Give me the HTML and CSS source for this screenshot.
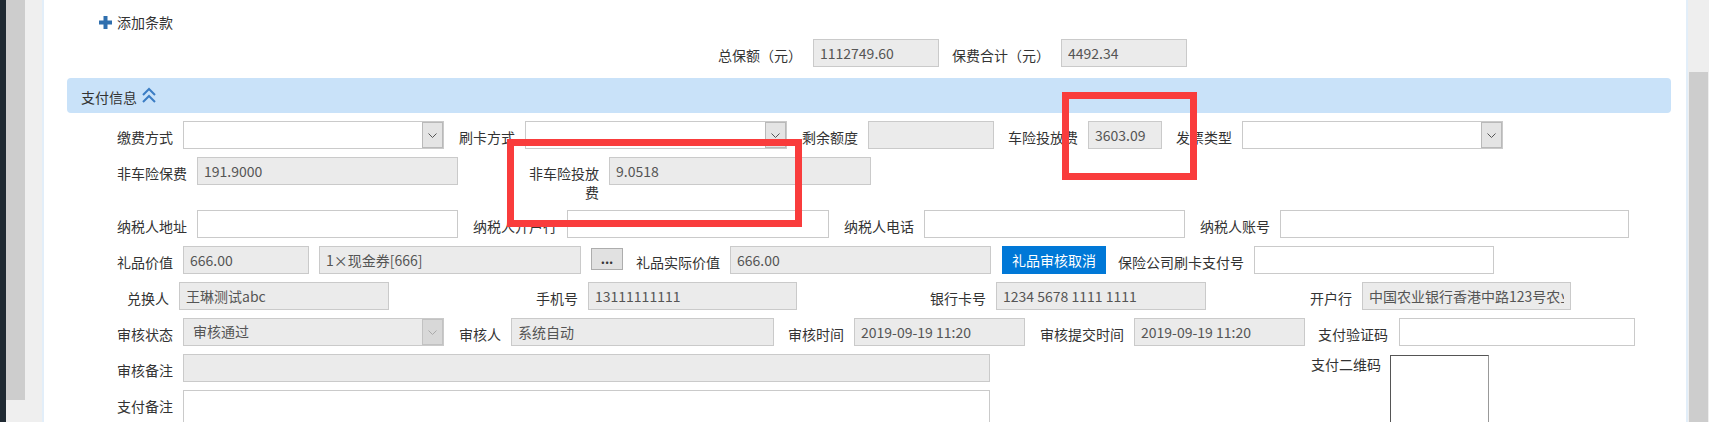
FILE: index.html
```html
<!DOCTYPE html>
<html>
<head>
  <meta charset="utf-8">
  <title>支付信息</title>
  <link rel="stylesheet" href="styles.css">
</head>
<body>
  <div class="edge"></div>
  <div class="outer-scroll"><div class="outer-thumb"></div></div>
  <div class="gutter"></div>

  <div class="panel">
    <div class="add-row">
      <svg class="plus" width="13" height="13" viewBox="0 0 13 13"><rect x="4.5" y="0" width="4" height="13"/><rect x="0" y="4.5" width="13" height="4"/></svg>
      <span>添加条款</span>
    </div>

    <div class="totals">
      <label class="lbl mr11">总保额（元）</label>
      <input class="fld ro w126" value="1112749.60" readonly>
      <label class="lbl mr11 g13">保费合计（元）</label>
      <input class="fld ro w126" value="4492.34" readonly>
    </div>

    <div class="sec-head">
      <span>支付信息</span>
      <svg class="up2" width="14" height="17" viewBox="0 0 14 17"><polyline points="1,8 7,2 13,8"/><polyline points="1,15 7,9 13,15"/></svg>
    </div>

    <div class="form">
      <!-- 第一行 -->
      <div class="row">
        <label class="lbl">缴费方式</label>
        <div class="sel w261"><span class="sel-btn"><svg width="9" height="5" viewBox="0 0 9 5"><polyline points="0.5,0.5 4.5,4.5 8.5,0.5"/></svg></span></div>
        <label class="lbl g15">刷卡方式</label>
        <div class="sel w262"><span class="sel-btn"><svg width="9" height="5" viewBox="0 0 9 5"><polyline points="0.5,0.5 4.5,4.5 8.5,0.5"/></svg></span></div>
        <label class="lbl g15">剩余额度</label>
        <input class="fld ro w126" value="" readonly>
        <label class="lbl g14">车险投放费</label>
        <input class="fld ro w74" value="3603.09" readonly>
        <label class="lbl g14">发票类型</label>
        <div class="sel w261"><span class="sel-btn"><svg width="9" height="5" viewBox="0 0 9 5"><polyline points="0.5,0.5 4.5,4.5 8.5,0.5"/></svg></span></div>
      </div>

      <div class="row">
        <label class="lbl">非车险保费</label>
        <input class="fld ro w261" value="191.9000" readonly>
        <label class="lbl wrap g71">非车险投放费</label>
        <input class="fld ro w262" value="9.0518" readonly>
      </div>

      <div class="row">
        <label class="lbl">纳税人地址</label>
        <input class="fld w261" value="">
        <label class="lbl g15">纳税人开户行</label>
        <input class="fld w262" value="">
        <label class="lbl g15">纳税人电话</label>
        <input class="fld w261" value="">
        <label class="lbl g15">纳税人账号</label>
        <input class="fld w349" value="">
      </div>

      <div class="row">
        <label class="lbl">礼品价值</label>
        <input class="fld ro w126" value="666.00" readonly>
        <input class="fld ro w262 g10" value="1×现金券[666]" readonly>
        <button class="dots g10">...</button>
        <label class="lbl g13">礼品实际价值</label>
        <input class="fld ro w261" value="666.00" readonly>
        <button class="btn-blue g11">礼品审核取消</button>
        <label class="lbl g12">保险公司刷卡支付号</label>
        <input class="fld w240" value="">
      </div>

      <div class="row">
        <label class="lbl g10">兑换人</label>
        <input class="fld ro w210" value="王琳测试abc" readonly>
        <label class="lbl g147">手机号</label>
        <input class="fld ro w209" value="13111111111" readonly>
        <label class="lbl g133">银行卡号</label>
        <input class="fld ro w210" value="1234 5678 1111 1111" readonly>
        <label class="lbl g104">开户行</label>
        <input class="fld ro w209" value="中国农业银行香港中路123号农业银行" readonly>
      </div>

      <div class="row">
        <label class="lbl">审核状态</label>
        <div class="sel off w261"><span class="sel-val">审核通过</span><span class="sel-btn"><svg width="9" height="5" viewBox="0 0 9 5"><polyline points="0.5,0.5 4.5,4.5 8.5,0.5"/></svg></span></div>
        <label class="lbl g15">审核人</label>
        <input class="fld ro w263" value="系统自动" readonly>
        <label class="lbl g14">审核时间</label>
        <input class="fld ro w171" value="2019-09-19 11:20" readonly>
        <label class="lbl g15">审核提交时间</label>
        <input class="fld ro w171" value="2019-09-19 11:20" readonly>
        <label class="lbl mr11 g13">支付验证码</label>
        <input class="fld w236" value="">
      </div>

      <div class="bottom">
        <div class="left-col">
          <div class="row">
            <label class="lbl">审核备注</label>
            <input class="fld ro w807" value="" readonly>
          </div>
          <div class="row">
            <label class="lbl">支付备注</label>
            <textarea class="fld area w807"></textarea>
          </div>
        </div>
        <div class="qr-block">
          <label class="qr-lbl">支付二维码</label>
          <div class="qr-box"></div>
        </div>
      </div>
    </div>

    <!-- 截图上的红框标注 -->
    <div class="mark mark-a"></div>
    <div class="mark mark-b"></div>
  </div>

  <div class="inner-scroll"><div class="inner-thumb"></div></div>
</body>
</html>
```

FILE: styles.css
```css
html, body {
  margin: 0;
  height: 422px;
  overflow: hidden;
}

body {
  display: flex;
  font-family: "Noto Sans CJK SC", "Microsoft YaHei", sans-serif;
  font-size: 14px;
  color: #333;
}

/* 外框和滚动条 */
.edge {
  width: 6px;
  background-color: #202a33;
}

.outer-scroll {
  width: 19px;
  background-color: #efefef;
}

.outer-thumb {
  height: 400px;
  background-color: #cdcdcd;
}

.gutter {
  width: 17px;
  background-color: #efefef;
}

.inner-scroll {
  width: 21px;
  background-color: #eeeeee;
  padding-top: 72px;
  box-sizing: border-box;
}

.inner-thumb {
  margin-left: 1px;
  width: 19px;
  height: 100%;
  background-color: #cdcdcd;
}

.panel {
  flex: 1;
  position: relative;
  background-color: #fff;
  border-left: 2px solid #e2eef9;
  border-right: 2px solid #e2eef9;
}

/* 添加条款 */
.add-row {
  display: flex;
  align-items: center;
  height: 20px;
  padding: 12px 0 0 55px;
  line-height: 20px;
}

.plus {
  fill: #2f6fae;
  margin-right: 5px;
}

.totals {
  display: flex;
  align-items: flex-start;
  margin-top: 7px;
  padding-left: 674px;
}

/* 支付信息 标题栏 */
.sec-head {
  display: flex;
  align-items: center;
  height: 35px;
  margin: 11px 15px 0 23px;
  padding-left: 14px;
  background-color: #c9e2f9;
  border-radius: 4px;
  line-height: 20px;
}

.sec-head span {
  padding-top: 2px;
}

.up2 {
  margin-left: 5px;
  fill: none;
  stroke: #3b7dc4;
  stroke-width: 2;
}

.form {
  margin-top: 8px;
  padding-left: 73px;
}

.row {
  display: flex;
  align-items: flex-start;
  margin-bottom: 8px;
}

.lbl {
  flex-shrink: 0;
  padding-top: 7px;
  line-height: 19px;
  white-space: nowrap;
  margin-right: 10px;
}

.lbl.wrap {
  white-space: normal;
  width: 70px;
  text-align: right;
}

/* 输入框 */
.fld {
  flex-shrink: 0;
  box-sizing: border-box;
  height: 28px;
  margin: 0;
  padding: 0 6px;
  border: 1px solid #cacaca;
  background-color: #fff;
  font-family: "Noto Sans CJK SC", "Microsoft YaHei", sans-serif;
  font-size: 14px;
  color: #555;
  outline: none;
}

.fld.ro {
  background-color: #ebebeb;
}

.area {
  height: 60px;
  resize: none;
}

.w74 { width: 74px; }
.w126 { width: 126px; }
.w171 { width: 171px; }
.w209 { width: 209px; }
.w210 { width: 210px; }
.w236 { width: 236px; }
.w240 { width: 240px; }
.w261 { width: 261px; }
.w262 { width: 262px; }
.w263 { width: 263px; }
.w349 { width: 349px; }
.w807 { width: 807px; }

/* 下拉框 */
.sel {
  flex-shrink: 0;
  position: relative;
  box-sizing: border-box;
  height: 28px;
  border: 1px solid #cacaca;
  background-color: #fff;
}

.sel-btn {
  position: absolute;
  top: 0;
  right: 0;
  bottom: 0;
  width: 19px;
  display: flex;
  align-items: center;
  justify-content: center;
  background-color: #e4e4e4;
  border: 1px solid #b9b9b9;
}

.sel-btn svg {
  fill: none;
  stroke: #555;
  stroke-width: 1;
}

.sel.off {
  background-color: #ebebeb;
}

.sel.off .sel-btn {
  background-color: #d8d8d8;
  border-color: #c2c2c2;
}

.sel.off .sel-btn svg {
  stroke: #aaa;
}

.sel-val {
  display: block;
  padding-left: 9px;
  line-height: 24px;
  color: #555;
}

/* 按钮 */
.dots {
  flex-shrink: 0;
  width: 32px;
  height: 22px;
  margin-top: 2px;
  padding: 0;
  border: 1px solid #adadad;
  background-color: #e1e1e1;
  font-family: "Noto Sans CJK SC", sans-serif;
  font-size: 13px;
  font-weight: bold;
  line-height: 16px;
  color: #333;
}

.btn-blue {
  flex-shrink: 0;
  width: 104px;
  height: 28px;
  padding: 0;
  border: none;
  background-color: #0078d7;
  color: #fff;
  font-family: "Noto Sans CJK SC", sans-serif;
  font-size: 14px;
}

/* 备注和二维码 */
.bottom {
  display: flex;
  align-items: flex-start;
}

.qr-block {
  display: flex;
  align-items: flex-start;
  margin-left: 321px;
}

.qr-lbl {
  padding-top: 1px;
  line-height: 19px;
  margin-right: 9px;
}

.qr-box {
  width: 99px;
  height: 110px;
  margin-top: 1px;
  box-sizing: border-box;
  border: 1px solid #999;
  border-top-color: #555;
  border-left-color: #555;
  background-color: #fff;
}

/* 间距, 放在最后以覆盖 .fld 的 margin */
.mr11 { margin-right: 11px; }

.g10 { margin-left: 10px; }
.g11 { margin-left: 11px; }
.g12 { margin-left: 12px; }
.g13 { margin-left: 13px; }
.g14 { margin-left: 14px; }
.g15 { margin-left: 15px; }
.g71 { margin-left: 71px; }
.g104 { margin-left: 104px; }
.g133 { margin-left: 133px; }
.g147 { margin-left: 147px; }

/* 红框标注 */
.mark {
  position: absolute;
  box-sizing: border-box;
  border: 7px solid #f93c3c;
}

.mark-a {
  left: 463px;
  top: 139px;
  width: 295px;
  height: 88px;
}

.mark-b {
  left: 1018px;
  top: 92px;
  width: 135px;
  height: 88px;
}
```
